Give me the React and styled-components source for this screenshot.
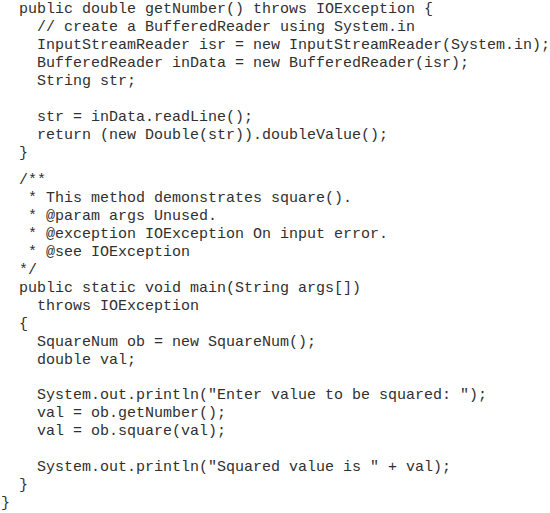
import React from 'react';
import styled, { createGlobalStyle } from 'styled-components';

const GlobalStyle = createGlobalStyle`
  html, body {
    margin: 0;
    padding: 0;
    background: #ffffff;
  }
`;

const Listing = styled.div`
  display: flex;
  flex-direction: column;
  width: 550px;
  height: 513px;
  box-sizing: border-box;
  padding: 1px 0 0 1px;
  font-family: 'Liberation Mono', 'Courier New', monospace;
  font-size: 15px;
  color: #303030;
  overflow: hidden;
`;

const Line = styled.div`
  height: ${(p) => (p.$short ? '9px' : '18px')};
  line-height: 18px;
  padding-left: ${(p) => p.$indent || 0}ch;
  white-space: pre;
`;

// [indent, text] ; '' = blank line, 'short' = smaller gap
const code = [
  [2, 'public double getNumber() throws IOException {'],
  [4, '// create a BufferedReader using System.in'],
  [4, 'InputStreamReader isr = new InputStreamReader(System.in);'],
  [4, 'BufferedReader inData = new BufferedReader(isr);'],
  [4, 'String str;'],
  [0, ''],
  [4, 'str = inData.readLine();'],
  [4, 'return (new Double(str)).doubleValue();'],
  [2, '}'],
  [0, 'short'],
  [2, '/**'],
  [3, '* This method demonstrates square().'],
  [3, '* @param args Unused.'],
  [3, '* @exception IOException On input error.'],
  [3, '* @see IOException'],
  [2, '*/'],
  [2, 'public static void main(String args[])'],
  [4, 'throws IOException'],
  [2, '{'],
  [4, 'SquareNum ob = new SquareNum();'],
  [4, 'double val;'],
  [0, ''],
  [4, 'System.out.println("Enter value to be squared: ");'],
  [4, 'val = ob.getNumber();'],
  [4, 'val = ob.square(val);'],
  [0, ''],
  [4, 'System.out.println("Squared value is " + val);'],
  [2, '}'],
  [0, '}'],
];

const App = () => (
  <>
    <GlobalStyle />
    <Listing>
      {code.map(([indent, text], i) =>
        text === 'short' ? (
          <Line key={i} $short />
        ) : (
          <Line key={i} $indent={indent}>
            {text}
          </Line>
        ),
      )}
    </Listing>
  </>
);

export default App;
